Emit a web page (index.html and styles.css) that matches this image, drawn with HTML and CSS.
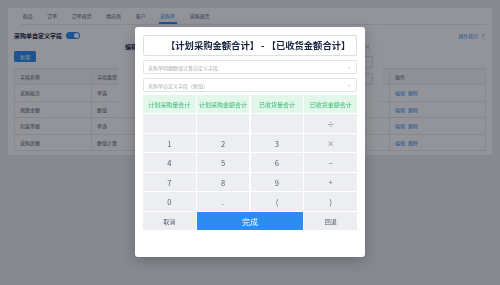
FILE: index.html
```html
<!DOCTYPE html>
<html lang="zh-CN">
<head>
    <meta charset="UTF-8">
    <meta name="viewport" content="width=device-width, initial-scale=1.0">
    <title>采购单自定义字段</title>
    <link rel="stylesheet" href="styles.css">
</head>
<body>
    <div class="page">
        <div class="card">
            <ul class="tabs">
                <li>商品</li>
                <li>订单</li>
                <li>订单退货</li>
                <li>供应商</li>
                <li>客户</li>
                <li class="active">采购单</li>
                <li>采购退货</li>
            </ul>

            <div class="card-head">
                <div class="title">采购单自定义字段 <span class="switch"></span></div>
                <a class="guide">操作指引 <span class="help">?</span></a>
            </div>

            <button class="btn-add">新增</button>

            <table class="fields">
                <thead>
                    <tr><th class="col-name">字段名称</th><th>字段类型</th><th class="col-op">操作</th></tr>
                </thead>
                <tbody>
                    <tr><td>采购批次</td><td>单选</td><td><a>编辑</a><a>删除</a></td></tr>
                    <tr><td>预算金额</td><td>数值</td><td><a>编辑</a><a>删除</a></td></tr>
                    <tr><td>包装等级</td><td>单选</td><td><a>编辑</a><a>删除</a></td></tr>
                    <tr><td>采购差额</td><td>数值计算</td><td><a>编辑</a><a>删除</a></td></tr>
                </tbody>
            </table>
        </div>
    </div>

    <div class="edit-dialog">
        <div class="edit-head">
            <span>编辑字段</span>
            <span class="close">×</span>
        </div>
        <div class="edit-row"><div class="input"></div></div>
        <div class="edit-row"><div class="input"></div></div>
    </div>

    <div class="mask"></div>

    <div class="modal">
        <div class="formula">【计划采购金额合计】 - 【已收货金额合计】</div>

        <div class="select">
            <span>采购单明细数值计算自定义字段</span>
            <svg width="4" height="3" viewBox="0 0 4 3"><path d="M0.5 0.8 L2 2.2 L3.5 0.8" fill="none" stroke="#b8bbc2" stroke-width="0.6"/></svg>
        </div>
        <div class="select">
            <span>采购单自定义字段（数值）</span>
            <svg width="4" height="3" viewBox="0 0 4 3"><path d="M0.5 0.8 L2 2.2 L3.5 0.8" fill="none" stroke="#b8bbc2" stroke-width="0.6"/></svg>
        </div>

        <div class="keypad">
            <div class="key field">计划采购量合计</div>
            <div class="key field">计划采购金额合计</div>
            <div class="key field">已收货量合计</div>
            <div class="key field">已收货金额合计</div>

            <div class="key"></div>
            <div class="key"></div>
            <div class="key"></div>
            <div class="key op">÷</div>

            <div class="key">1</div>
            <div class="key">2</div>
            <div class="key">3</div>
            <div class="key op">×</div>

            <div class="key">4</div>
            <div class="key">5</div>
            <div class="key">6</div>
            <div class="key op">−</div>

            <div class="key">7</div>
            <div class="key">8</div>
            <div class="key">9</div>
            <div class="key op">+</div>

            <div class="key">0</div>
            <div class="key">.</div>
            <div class="key">(</div>
            <div class="key">)</div>

            <div class="key small">取消</div>
            <div class="key done">完成</div>
            <div class="key small">回退</div>
        </div>
    </div>
</body>
</html>
```

FILE: styles.css
```css
:root {
    --blue: #2d8cf0;
    --text: #515a6e;
    --title: #17233d;
    --line: #e8eaec;
    --key-bg: #eceef2;
}

* {
    margin: 0;
    padding: 0;
    box-sizing: border-box;
}

body {
    font-family: 'Noto Sans CJK SC', 'Noto Sans', sans-serif;
    background: #e9ecf1;
    color: var(--text);
    width: 500px;
    height: 285px;
    overflow: hidden;
}

.page {
    padding: 8px;
}

.card {
    background: #fff;
    padding: 0 6px 5px;
    height: 147px;
}

/* tabs */
.tabs {
    display: flex;
    list-style: none;
    gap: 11.5px;
    margin-left: 7px;
    height: 17px;
    border-bottom: 1px solid var(--line);
    font-size: 5px;
}

.tabs li {
    height: 16px;
    line-height: 16px;
    padding: 0 1.5px;
}

.tabs li.active {
    color: var(--blue);
    box-shadow: inset 0 -2px 0 var(--blue);
}

.card-head {
    display: flex;
    justify-content: space-between;
    align-items: center;
    height: 20px;
}

.title {
    display: flex;
    align-items: center;
    gap: 4px;
    font-size: 6px;
    font-weight: bold;
    color: var(--title);
}

.switch {
    width: 14px;
    height: 7px;
    border-radius: 4px;
    background: var(--blue);
    position: relative;
}

.switch::after {
    content: '';
    position: absolute;
    right: 1px;
    top: 1px;
    width: 5px;
    height: 5px;
    border-radius: 50%;
    background: #fff;
}

.guide {
    font-size: 5px;
    color: var(--blue);
    margin-right: 2px;
}

.help {
    margin-left: 2px;
}

.btn-add {
    margin-top: 6px;
    width: 22px;
    height: 11px;
    border: none;
    border-radius: 1.5px;
    background: var(--blue);
    color: #fff;
    font-family: inherit;
    font-size: 5px;
    display: block;
}

/* table */
.fields {
    margin-top: 6px;
    width: 100%;
    border-collapse: collapse;
    border: 1px solid var(--line);
    font-size: 5px;
}

.fields th,
.fields td {
    text-align: left;
    font-weight: normal;
    padding: 0 5px;
    border-bottom: 1px solid var(--line);
}

.fields th {
    height: 16px;
    background: #f8f8f9;
}

.fields td {
    height: 16.5px;
}

.fields th:first-child,
.fields td:first-child {
    width: 77px;
    border-right: 1px solid var(--line);
}

.fields th:last-child,
.fields td:last-child {
    width: 96px;
    border-left: 1px solid var(--line);
}

.fields td a {
    color: var(--blue);
    margin-right: 3px;
}

/* dialog behind */
.edit-dialog {
    position: absolute;
    left: 118px;
    top: 35px;
    width: 264px;
    height: 67px;
    background: #fff;
    border-radius: 3px;
    padding: 6px 9px 0 7px;
}

.edit-head {
    display: flex;
    justify-content: space-between;
    align-items: center;
    height: 10px;
    font-size: 6px;
    font-weight: bold;
    color: var(--title);
}

.close {
    font-weight: normal;
    color: #999;
    font-size: 7px;
    margin-right: 2px;
}

.edit-row {
    display: flex;
    align-items: center;
    margin-top: 5px;
    padding-left: 60px;
}

.input {
    flex: 1;
    height: 12px;
    border: 1px solid #dcdee2;
    border-radius: 2px;
}

.mask {
    position: fixed;
    inset: 0;
    background: rgba(8, 12, 22, 0.44);
}

/* formula modal */
.modal {
    position: absolute;
    left: 135px;
    top: 27px;
    width: 230px;
    height: 230px;
    background: #fff;
    border-radius: 3px;
    padding: 8px 8px 0;
    box-shadow: 0 4px 14px rgba(0, 0, 0, 0.22);
}

.formula {
    height: 21px;
    line-height: 19px;
    border: 1px solid #dcdee2;
    border-radius: 2px;
    padding-left: 22px;
    font-size: 9.3px;
    font-weight: bold;
    color: var(--title);
    white-space: nowrap;
}

.select {
    display: flex;
    justify-content: space-between;
    align-items: center;
    margin-top: 4px;
    height: 14px;
    padding: 0 5px 0 4px;
    border: 1px solid #e3e5e8;
    border-radius: 2px;
    font-size: 5px;
    color: #a8abb2;
}

.keypad {
    margin-top: 3px;
    display: grid;
    grid-template-columns: repeat(4, 1fr);
    grid-auto-rows: 18.3px;
    gap: 1.2px;
}

.key {
    display: flex;
    align-items: center;
    justify-content: center;
    background: var(--key-bg);
    font-size: 7.5px;
    color: var(--text);
}

.key.field {
    background: #e2f6ea;
    color: #34bb72;
    font-size: 6px;
}

.key.op {
    color: #666;
    font-size: 7px;
}

.key.small {
    font-size: 6px;
}

.key.done {
    grid-column: span 2;
    background: var(--blue);
    color: #fff;
    font-size: 8px;
}
```
